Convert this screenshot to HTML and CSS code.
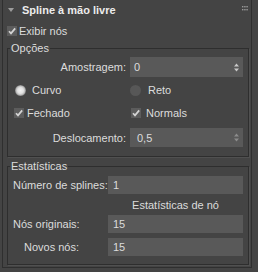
FILE: index.html
```html
<!DOCTYPE html>
<html lang="pt">
<head>
  <meta charset="UTF-8">
  <title>Spline à mão livre</title>
  <link rel="stylesheet" href="styles.css">
</head>
<body>

  <div class="rollout">
    <!-- Rollout header -->
    <div class="rollout-header">
      <svg class="arrow" width="6" height="4" viewBox="0 0 6 4"><path d="M0 0H6L3 4Z" fill="#9c9c9c"/></svg>
      <span class="title">Spline à mão livre</span>
      <svg class="grip" width="6" height="5" viewBox="0 0 6 5">
        <g fill="#9a9a9a">
          <rect x="0" y="0" width="1.4" height="1.4"/><rect x="2.2" y="0" width="1.4" height="1.4"/><rect x="4.4" y="0" width="1.4" height="1.4"/>
          <rect x="0" y="3" width="1.4" height="1.4"/><rect x="2.2" y="3" width="1.4" height="1.4"/><rect x="4.4" y="3" width="1.4" height="1.4"/>
        </g>
      </svg>
    </div>

    <label class="top-check"><span class="checkbox"></span>Exibir nós</label>

    <!-- Opções -->
    <fieldset class="group">
      <legend>Opções</legend>

      <div class="field">
        <span class="field-label">Amostragem:</span>
        <div class="spin-box">
          <span>0</span>
          <svg class="spin" width="5" height="9" viewBox="0 0 5 9"><path d="M0 3.5H5L2.5 0.5ZM0 5.5H5L2.5 8.5Z" fill="#c8c8c8"/></svg>
        </div>
      </div>

      <div class="pair radios">
        <label class="opt"><span class="radio on"></span>Curvo</label>
        <label class="opt reto"><span class="radio"></span>Reto</label>
      </div>

      <div class="pair checks">
        <label class="opt fechado"><span class="checkbox"></span>Fechado</label>
        <label class="opt normals"><span class="checkbox"></span>Normals</label>
      </div>

      <div class="field offset">
        <span class="field-label">Deslocamento:</span>
        <div class="spin-box dim">
          <span>0,5</span>
          <svg class="spin" width="5" height="9" viewBox="0 0 5 9"><path d="M0 3.5H5L2.5 0.5ZM0 5.5H5L2.5 8.5Z" fill="#8c8c8c"/></svg>
        </div>
      </div>
    </fieldset>

    <!-- Estatísticas -->
    <fieldset class="group stats">
      <legend>Estatísticas</legend>

      <div class="stat-row first">
        <span>Número de splines:</span>
        <div class="value-box">1</div>
      </div>

      <div class="stat-row caption">
        <span></span>
        <span class="caption-text">Estatísticas de nó</span>
      </div>

      <div class="stat-row short">
        <span class="stat-label">Nós originais:</span>
        <div class="value-box">15</div>
      </div>

      <div class="stat-row short last">
        <span class="stat-label">Novos nós:</span>
        <div class="value-box">15</div>
      </div>
    </fieldset>
  </div>

</body>
</html>
```

FILE: styles.css
```css
/* Page */
body {
  margin: 0;
  width: 258px;
  height: 272px;
  overflow: hidden;
  background: #444444;
  font-family: "Liberation Sans", Arial, sans-serif;
  font-size: 11px;
  color: #dcdcdc;
}

/* Rollout panel */
.rollout {
  margin-left: 2px;
  width: 248px;
  height: 267px;
  border-left: 1px solid #2f2f2f;
  border-right: 1px solid #2f2f2f;
  border-bottom: 1px solid #2f2f2f;
}

.rollout-header {
  display: flex;
  align-items: center;
  height: 20px;
  padding-left: 5px;
}

.title {
  margin-left: 8px;
  font-weight: bold;
  color: #ececec;
}

.grip {
  margin-left: auto;
  margin-right: 3px;
  align-self: flex-start;
  margin-top: 6px;
}

/* Checkboxes and radios */
.checkbox {
  display: inline-block;
  flex: none;
  width: 10px;
  height: 10px;
  background: #5c5c5c url("data:image/svg+xml;utf8,<svg xmlns='http://www.w3.org/2000/svg' width='10' height='10'><path d='M2 5.2L4 7.4L8.2 2.4' fill='none' stroke='%23d4d4d4' stroke-width='1.7'/></svg>") no-repeat;
}

.radio {
  display: inline-block;
  flex: none;
  width: 11px;
  height: 11px;
  border-radius: 50%;
  background: #575757;
}

.radio.on {
  background: radial-gradient(circle, #f2f2f2 0, #e0e0e0 3px, #b8b8b8 4.5px, #7a7a7a 5.5px);
}

.top-check {
  display: flex;
  align-items: center;
  gap: 2px;
  height: 18px;
  margin-top: 2px;
  padding-left: 4px;
}

/* Group boxes */
.group {
  margin: 2px 2px 0 4px;
  padding: 0 5px 9px 0;
  min-width: 0;
  border: 1px solid #2e2e2e;
  box-shadow: 1px 1px 0 #505050;
}

.group legend {
  margin-left: 2px;
  padding: 0 1px;
  line-height: 12px;
}

.stats {
  margin-top: 3px;
  padding-bottom: 8px;
}

/* Spinner rows */
.field {
  display: grid;
  grid-template-columns: 118px 1fr;
  column-gap: 4px;
  align-items: center;
  margin-top: 3px;
}

.field-label {
  text-align: right;
  white-space: nowrap;
}

.spin-box {
  display: flex;
  align-items: center;
  height: 20px;
  padding: 0 4px;
  background: #595959;
}

.spin {
  margin-left: auto;
}

.offset {
  margin-top: 6px;
}

.offset .spin-box {
  height: 19px;
  padding-left: 7px;
}

/* Radio / checkbox pairs */
.pair {
  display: grid;
  align-items: center;
  height: 18px;
}

.radios {
  grid-template-columns: 115px 1fr;
  margin-top: 4px;
  padding-left: 7px;
}

.checks {
  grid-template-columns: 117px 1fr;
  margin-top: 5px;
  padding-left: 6px;
}

.opt {
  display: flex;
  align-items: center;
  gap: 6px;
}

.reto {
  gap: 7px;
}

.fechado {
  gap: 3px;
}

.normals {
  gap: 5px;
}

/* Statistics rows */
.stat-row {
  display: grid;
  grid-template-columns: 95px 1fr;
  align-items: center;
  padding-left: 5px;
  white-space: nowrap;
}

.stat-row.first {
  margin-top: 4px;
}

.value-box {
  height: 18px;
  line-height: 18px;
  padding-left: 5px;
  background: #595959;
}

.caption {
  height: 18px;
  margin-top: 2px;
}

.caption-text {
  text-align: center;
}

.short {
  margin-top: 1px;
}

.short.last {
  margin-top: 5px;
}

.stat-label {
  text-align: right;
  padding-right: 29px;
}
```
